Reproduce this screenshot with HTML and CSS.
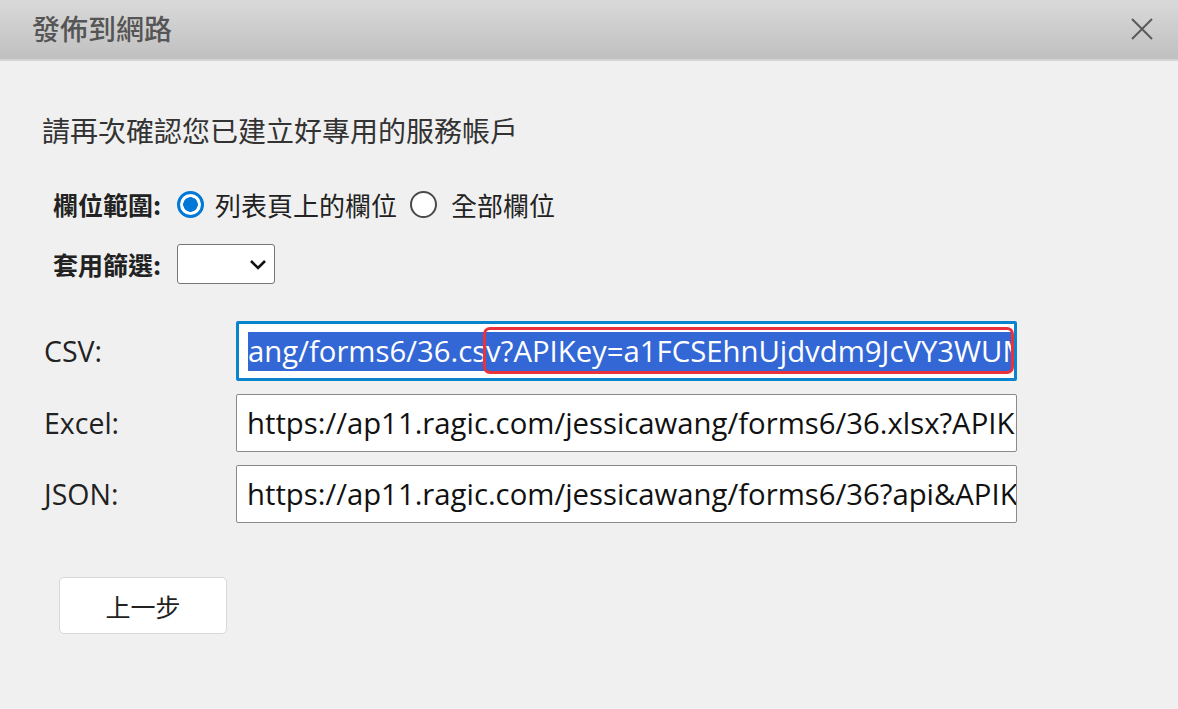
FILE: index.html
```html
<!DOCTYPE html>
<html lang="zh-Hant">
<head>
<meta charset="utf-8">
<title>發佈到網路</title>
<link rel="stylesheet" href="styles.css">
</head>
<body>
<div class="dialog">
  <div class="titlebar">
    <span class="title">發佈到網路</span>
    <span class="close" aria-label="close">
      <svg width="24" height="24" viewBox="0 0 24 24"><path d="M2 2 L22 22 M22 2 L2 22" stroke="#5a5a5a" stroke-width="2" fill="none"/></svg>
    </span>
  </div>
  <div class="content">
    <p class="intro">請再次確認您已建立好專用的服務帳戶</p>
    <div class="row scope">
      <span class="lbl">欄位範圍:</span>
      <span class="radio checked"></span>
      <span class="opt">列表頁上的欄位</span>
      <span class="radio"></span>
      <span class="opt">全部欄位</span>
    </div>
    <div class="row filter">
      <span class="lbl">套用篩選:</span>
      <span class="select">
        <svg width="20" height="14" viewBox="0 0 20 14"><path d="M3 4 L10 11 L17 4" stroke="#111" stroke-width="2.6" fill="none"/></svg>
      </span>
    </div>
    <div class="links">
      <span class="flabel">CSV:</span>
      <div class="field focused">
        <span class="sel">ang/forms6/36.csv?APIKey=a1FCSEhnUjdvdm9JcVY3WUM</span>
        <span class="mark"></span>
      </div>
      <span class="flabel">Excel:</span>
      <div class="field"><span class="txt">https://ap11.ragic.com/jessicawang/forms6/36.xlsx?APIKey=a1FCSEhnUjdvdm9JcVY3WUM</span></div>
      <span class="flabel">JSON:</span>
      <div class="field"><span class="txt">https://ap11.ragic.com/jessicawang/forms6/36?api&amp;APIKey=a1FCSEhnUjdvdm9JcVY3WUM</span></div>
    </div>
    <button class="back">上一步</button>
  </div>
</div>
</body>
</html>
```
FILE: styles.css
```css
* { box-sizing: border-box; }
html, body { margin: 0; padding: 0; }
body {
  width: 1178px;
  height: 709px;
  overflow: hidden;
  background: #f0f0f0;
  font-family: "Open Sans", "Noto Sans CJK TC", sans-serif;
  color: #222;
}
.dialog { display: flex; flex-direction: column; height: 709px; }
.titlebar {
  height: 61px;
  flex: none;
  display: flex;
  align-items: center;
  justify-content: space-between;
  padding: 0 24px 0 32px;
  background: linear-gradient(#d9d9d9, #c0c0c0);
  border-bottom: 2px solid #d4d4d4;
}
.title {
  font-family: "Noto Sans CJK TC", sans-serif;
  font-size: 28px;
  font-weight: 500;
  color: #555;
  margin-top: -4px;
}
.close { display: flex; width: 24px; height: 24px; margin-top: -2px; }
.content { padding: 0 0 0 42px; }
.intro {
  margin: 49px 0 0 0;
  font-family: "Noto Sans CJK TC", sans-serif;
  font-size: 28px;
  line-height: 40px;
  color: #333;
}
.row { display: flex; align-items: center; padding-left: 11px; }
.scope { margin-top: 32px; height: 44px; }
.filter { margin-top: 16px; height: 44px; }
.lbl {
  font-family: "Noto Sans CJK TC", sans-serif;
  font-size: 25px;
  font-weight: 700;
  color: #222;
  width: 124px;
}
.opt {
  font-family: "Noto Sans CJK TC", sans-serif;
  font-size: 26px;
  color: #222;
  margin-left: 11px;
}
.radio {
  width: 27px; height: 27px;
  border-radius: 50%;
  border: 2px solid #4a4a4a;
  background: #fff;
  flex: none;
}
.opt + .radio { margin-left: 13px; }
.opt + .radio + .opt { margin-left: 14px; }
.radio.checked {
  border: 3px solid #0078d7;
  background: radial-gradient(circle, #0078d7 0 7px, #fff 7.5px);
}
.select {
  width: 98px; height: 40px;
  border: 1px solid #767676;
  border-radius: 3px;
  background: #fff;
  display: flex;
  align-items: center;
  justify-content: flex-end;
  padding-right: 6px;
}
.links {
  display: grid;
  grid-template-columns: 194px 781px;
  row-gap: 13px;
  align-items: center;
  margin-top: 35px;
}
.flabel { font-size: 28.5px; color: #222; padding-left: 2px; }
.field {
  position: relative;
  height: 58px;
  background: #fff;
  border: 1px solid #8a8a8a;
  border-radius: 2px;
  overflow: hidden;
  white-space: nowrap;
  display: flex;
  align-items: center;
  padding-left: 10px;
  font-size: 29.3px;
  color: #111;
}
.field.focused {
  height: 60px;
  border: 3px solid #0a84cc;
  padding: 0 0 0 9px;
}
.sel {
  background: #3367d6;
  color: #fff;
  line-height: 39px;
  height: 39px;
  display: block;
  overflow: hidden;
  width: 765px;
}
.mark {
  position: absolute;
  left: 244px;
  top: 3px;
  width: 531px;
  height: 47px;
  border: 3px solid #e8323c;
  border-radius: 7px;
}
.back {
  margin: 54px 0 0 17px;
  width: 168px;
  height: 57px;
  background: #fff;
  border: 1px solid #d8d8d8;
  border-radius: 5px;
  font-family: "Noto Sans CJK TC", sans-serif;
  font-size: 25px;
  color: #222;
}
```
